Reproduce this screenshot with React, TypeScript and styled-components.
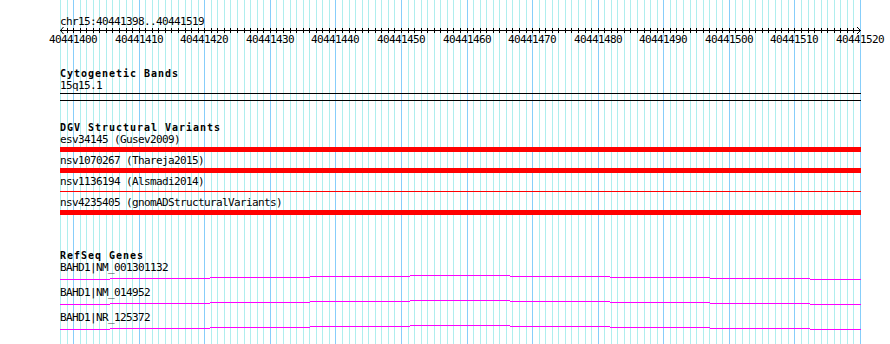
import React from 'react';
import styled, { createGlobalStyle } from 'styled-components';

const Global = createGlobalStyle`
  html, body { margin: 0; padding: 0; background: #ffffff; }
  body { width: 890px; height: 344px; overflow: hidden; }
`;

const START = 40441398;
const END = 40441520;
const LEFT = 60;
const SPAN = 800;
const pxPerBp = SPAN / (END - START);
const xOf = (pos: number) => Math.round(LEFT + (pos - START) * pxPerBp);

const Page = styled.div`
  position: relative;
  width: 890px;
  height: 344px;
  background: #ffffff;
  overflow: hidden;
`;

const GridSvg = styled.svg`
  position: absolute;
  left: 0;
  top: 0;
  pointer-events: none;
`;

const Panel = styled.div`
  position: relative;
  margin-left: ${LEFT}px;
  width: ${SPAN + 1}px;
  padding-top: 15px;
  font-family: "DejaVu Sans Mono", "Liberation Mono", monospace;
  color: #000000;
`;

const Location = styled.div`
  font-size: 11px;
  letter-spacing: -0.62px;
  line-height: 13px;
  height: 13px;
  white-space: nowrap;
`;

const RulerSvg = styled.svg`
  display: block;
  overflow: visible;
`;

const RulerLabel = styled.text`
  font-family: "DejaVu Sans Mono", "Liberation Mono", monospace;
  font-size: 11px;
  letter-spacing: -0.62px;
  fill: #000000;
`;

const Track = styled.section<{ $gap: number }>`
  margin-top: ${(p) => p.$gap}px;
`;

const TrackTitle = styled.div`
  font-size: 10px;
  font-weight: bold;
  letter-spacing: 0.98px;
  line-height: 12px;
  height: 12px;
  white-space: nowrap;
`;

const Label = styled.div`
  font-size: 11px;
  letter-spacing: -0.62px;
  line-height: 12px;
  height: 12px;
  white-space: nowrap;
`;

const BandBox = styled.div`
  box-sizing: border-box;
  margin-top: 1px;
  height: 8px;
  border-top: 1px solid #000000;
  border-bottom: 1px solid #000000;
`;

const VariantRow = styled.div``;

const VariantBar = styled.div<{ $thin?: boolean }>`
  background: #ff0000;
  height: ${(p) => (p.$thin ? 1 : 5)}px;
  margin-top: ${(p) => (p.$thin ? 3 : 1)}px;
  margin-bottom: ${(p) => (p.$thin ? 5 : 3)}px;
`;

const GeneRow = styled.div``;

const GeneSvg = styled.svg`
  display: block;
`;

const variants = [
  { label: 'esv34145 (Gusev2009)', thin: false },
  { label: 'nsv1070267 (Thareja2015)', thin: false },
  { label: 'nsv1136194 (Alsmadi2014)', thin: true },
  { label: 'nsv4235405 (gnomADStructuralVariants)', thin: false },
];

const genes = ['BAHD1|NM_001301132', 'BAHD1|NM_014952', 'BAHD1|NR_125372'];

// stepped transcript line: [x0, x1, row offset]
const geneSegments: [number, number, number][] = [
  [0, 50, 5],
  [50, 150, 4],
  [150, 250, 3],
  [250, 350, 2],
  [350, 450, 1],
  [450, 550, 2],
  [550, 650, 3],
  [650, 750, 4],
  [750, 801, 5],
];

function Grid() {
  const lines = [];
  for (let p = START; p <= END; p++) {
    const x = xOf(p) + 0.5;
    const major = p % 10 === 0;
    lines.push(
      <line
        key={p}
        x1={x}
        x2={x}
        y1={0}
        y2={344}
        stroke={major ? '#87cefa' : '#afeeee'}
        strokeWidth={1}
      />
    );
  }
  return (
    <GridSvg width={890} height={344} shapeRendering="crispEdges">
      {lines}
    </GridSvg>
  );
}

function Ruler() {
  const ticks = [];
  const labels = [];
  for (let p = START + 1; p < END; p++) {
    const x = xOf(p) - LEFT + 0.5;
    ticks.push(<line key={p} x1={x} x2={x} y1={0} y2={5} stroke="#000" strokeWidth={1} />);
  }
  for (let p = 40441400; p <= END; p += 10) {
    const x = xOf(p) - LEFT;
    labels.push(
      <RulerLabel key={p} x={x} y={15.3} textAnchor="middle">
        {p}
      </RulerLabel>
    );
  }
  return (
    <RulerSvg width={SPAN + 1} height={18}>
      <g shapeRendering="crispEdges">
        <line x1={0} x2={SPAN + 1} y1={2.5} y2={2.5} stroke="#000" strokeWidth={1} />
        {ticks}
      </g>
      <polyline points="3.5,-1 0.5,2.5 3.5,6" fill="none" stroke="#000" strokeWidth={1} />
      <polyline points={`${SPAN - 3},-1 ${SPAN + 0.5},2.5 ${SPAN - 3},6`} fill="none" stroke="#000" strokeWidth={1} />
      {labels}
    </RulerSvg>
  );
}

function GeneLine() {
  return (
    <GeneSvg width={SPAN + 1} height={13} shapeRendering="crispEdges">
      {geneSegments.map(([a, b, r], i) => (
        <line key={i} x1={a} x2={b} y1={r + 0.5} y2={r + 0.5} stroke="#ff00ff" strokeWidth={1} />
      ))}
    </GeneSvg>
  );
}

export default function App() {
  return (
    <Page>
      <Global />
      <Grid />
      <Panel>
        <Location>chr15:40441398..40441519</Location>
        <Ruler />
        <Track $gap={22}>
          <TrackTitle>Cytogenetic Bands</TrackTitle>
          <Label>15q15.1</Label>
          <BandBox />
        </Track>
        <Track $gap={21}>
          <TrackTitle>DGV Structural Variants</TrackTitle>
          {variants.map((v) => (
            <VariantRow key={v.label}>
              <Label>{v.label}</Label>
              <VariantBar $thin={v.thin} />
            </VariantRow>
          ))}
        </Track>
        <Track $gap={35}>
          <TrackTitle>RefSeq Genes</TrackTitle>
          {genes.map((g) => (
            <GeneRow key={g}>
              <Label>{g}</Label>
              <GeneLine />
            </GeneRow>
          ))}
        </Track>
      </Panel>
    </Page>
  );
}
